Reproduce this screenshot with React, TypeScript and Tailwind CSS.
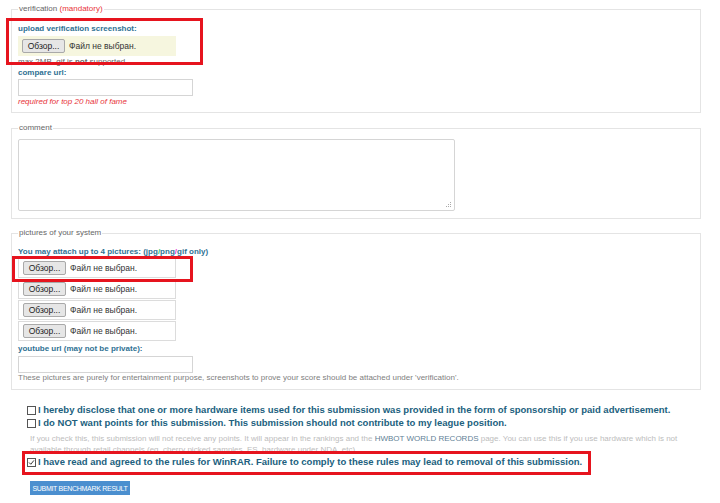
import React from 'react';

const teal = 'text-[#2f7193]';

function FileInput({ yellow = false }: { yellow?: boolean }) {
  return (
    <div
      className={`flex items-center h-[20px] w-[158px] pl-[4px] gap-[4px] ${
        yellow ? 'bg-[#f6f6df]' : 'bg-white border border-[#dcdcdc]'
      }`}
    >
      <span className="h-[14px] w-[43px] flex items-center justify-center bg-[#e6e6e6] border border-[#a9a9a9] rounded-[2px] text-[8.5px] text-[#222] leading-none">
        Обзор...
      </span>
      <span className="text-[8.5px] text-[#333]">Файл не выбран.</span>
    </div>
  );
}

function Fieldset({ legend, children, className = '' }: { legend: React.ReactNode; children: React.ReactNode; className?: string }) {
  return (
    <fieldset className={`border border-[#e4e4e4] pl-[6px] pr-[6px] ${className}`}>
      <legend className="px-px text-[8px] leading-[12px] text-[#666]">{legend}</legend>
      {children}
    </fieldset>
  );
}

function Check({ checked = false, children }: { checked?: boolean; children: React.ReactNode }) {
  return (
    <div className="flex items-center gap-[2px] h-[13px]">
      <span className="w-[9px] h-[9px] border border-[#555] bg-white flex items-center justify-center shrink-0">
        {checked && (
          <svg viewBox="0 0 10 10" className="w-[7px] h-[7px]">
            <path d="M1.5 5 L4 7.5 L8.5 2" stroke="#333" strokeWidth="1.4" fill="none" />
          </svg>
        )}
      </span>
      <span className="text-[9.5px] font-bold text-[#215f7e] whitespace-nowrap">{children}</span>
    </div>
  );
}

export default function App() {
  return (
    <div className="relative w-[720px] h-[503px] bg-white overflow-hidden font-['Liberation_Sans',Arial,sans-serif]">
      <div className="pl-[11px] w-[701px]">
        {/* verification */}
        <Fieldset legend={<>verification <span className="text-[#e8343a]">(mandatory)</span></>} className="mt-[3px] pt-[8px] h-[110px]">
          <div className={`text-[8px] font-bold leading-[12px] ${teal}`}>upload verification screenshot:</div>
          <div className="mt-[1px]"><FileInput yellow /></div>
          <div className="text-[8px] leading-[11px] text-[#666]">
            max 2MB, gif is <b>not</b> supported
          </div>
          <div className={`text-[8px] font-bold leading-[12px] ${teal}`}>compare url:</div>
          <div className="w-[175px] h-[17px] border border-[#d5d5d5] bg-white" />
          <div className="text-[8px] italic leading-[11px] text-[#e8343a]">required for top 20 hall of fame</div>
        </Fieldset>

        {/* comment */}
        <Fieldset legend="comment" className="mt-[9px] pt-[5px] h-[97px]">
          <div className="relative w-[437px] h-[72px] border border-[#d5d5d5] rounded-[2px] bg-white">
            <svg viewBox="0 0 6 6" className="absolute right-[2px] bottom-[2px] w-[6px] h-[6px]">
              <rect x="4" y="0" width="1" height="1" fill="#aaa" />
              <rect x="2" y="2" width="1" height="1" fill="#aaa" />
              <rect x="4" y="2" width="1" height="1" fill="#aaa" />
              <rect x="0" y="4" width="1" height="1" fill="#aaa" />
              <rect x="2" y="4" width="1" height="1" fill="#aaa" />
              <rect x="4" y="4" width="1" height="1" fill="#aaa" />
            </svg>
          </div>
        </Fieldset>

        {/* pictures */}
        <Fieldset legend="pictures of your system" className="mt-[8px] pt-[7px] h-[163px]">
          <div className={`text-[8px] font-bold leading-[12px] ${teal}`}>
            You may attach up to 4 pictures: (jpg<span className="text-[#2fc46a]">/</span>png<span className="text-[#e23bd0]">/</span>gif only)
          </div>
          <div className="flex flex-col gap-[1px]">
            <FileInput />
            <FileInput />
            <FileInput />
            <FileInput />
          </div>
          <div className={`mt-[2px] text-[8px] font-bold leading-[12px] ${teal}`}>youtube url (may not be private):</div>
          <div className="mt-[1px] w-[175px] h-[17px] border border-[#d5d5d5] bg-white" />
          <div className="text-[8px] leading-[10px] text-[#808080]">
            These pictures are purely for entertainment purpose, screenshots to prove your score should be attached under 'verification'.
          </div>
        </Fieldset>

        {/* checkboxes */}
        <div className="pl-[16px] mt-[14px]">
          <Check>I hereby disclose that one or more hardware items used for this submission was provided in the form of sponsorship or paid advertisement.</Check>
          <Check>I do NOT want points for this submission. This submission should not contribute to my league position.</Check>
          <div className="mt-[3px] pl-[3px] text-[8px] leading-[11px] text-[#bdbdbd]">
            <div className="whitespace-nowrap">
              If you check this, this submission will not receive any points. It will appear in the rankings and the{' '}
              <span className="text-[#5f7f96]">HWBOT WORLD RECORDS</span> page. You can use this if you use hardware which is not
            </div>
            <div className="whitespace-nowrap">available through retail channels (eg. cherry picked samples, ES, hardware under NDA, etc).</div>
          </div>
          <div className="mt-[1px]">
            <Check checked>I have read and agreed to the rules for WinRAR. Failure to comply to these rules may lead to removal of this submission.</Check>
          </div>
          <div className="mt-[12px] ml-[3px] flex items-center justify-center w-[100px] h-[14px] bg-[#4b8fcf] text-white text-[7px] tracking-[-0.3px] leading-none whitespace-nowrap">
            SUBMIT BENCHMARK RESULT
          </div>
        </div>
      </div>

      {/* red annotation boxes */}
      <div className="absolute left-[6px] top-[18px] w-[197px] h-[47px] border-[3px] border-[#e6141e]" />
      <div className="absolute left-[12px] top-[256px] w-[181px] h-[26px] border-[3px] border-[#e6141e]" />
      <div className="absolute left-[22px] top-[451px] w-[569px] h-[24px] border-[3px] border-[#e6141e]" />
    </div>
  );
}
